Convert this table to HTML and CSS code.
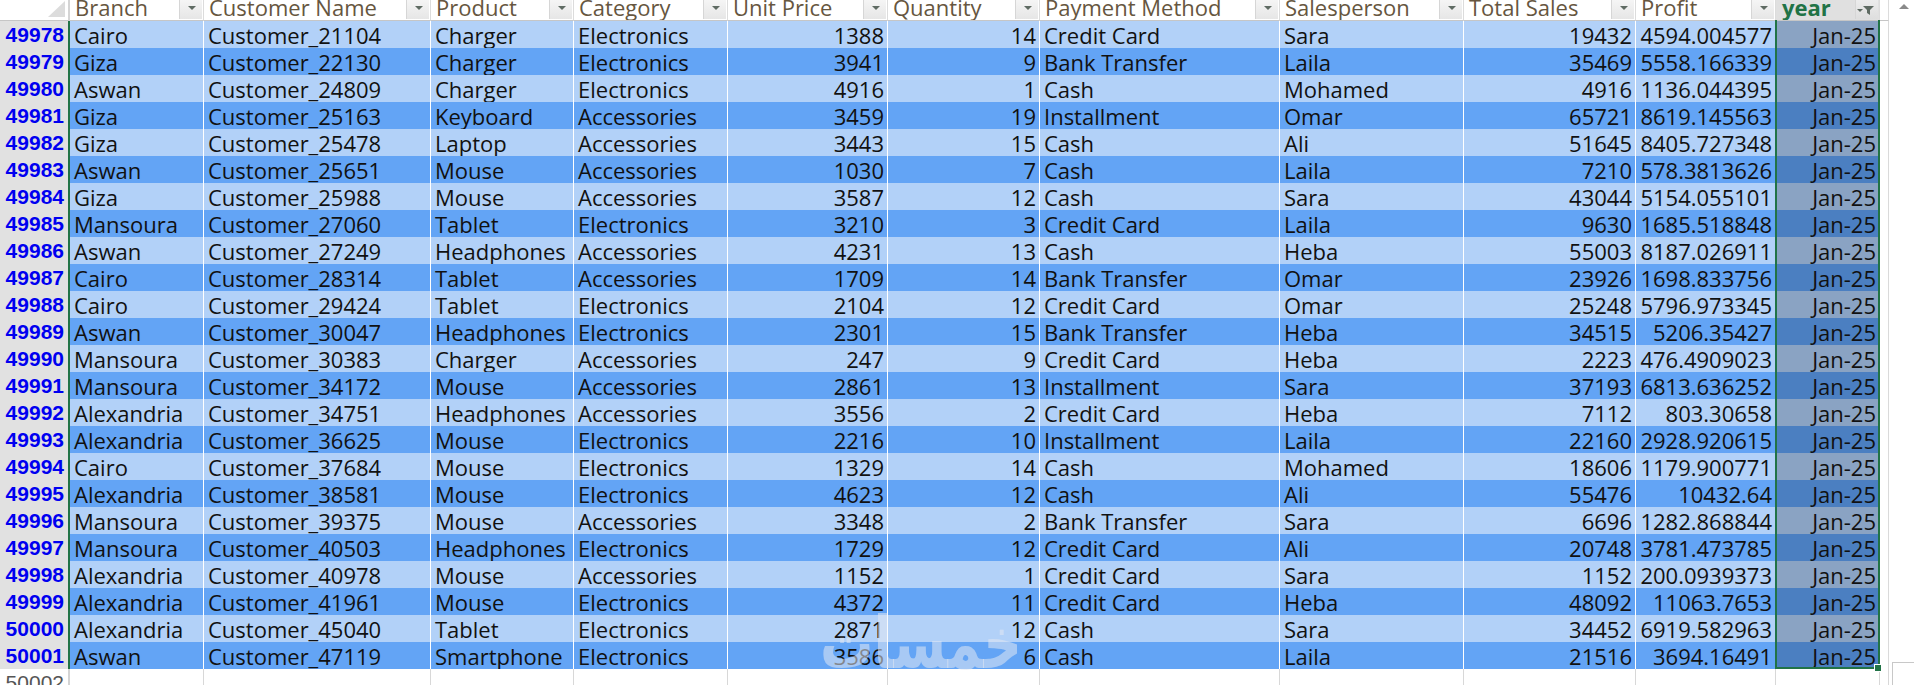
FILE: index.html
```html
<!DOCTYPE html>
<html>
<head>
<meta charset="utf-8">
<link rel="stylesheet" href="styles.css">
</head>
<body>
<div class="screen">
  <div class="sheet">
    <div class="row hdr">
      <div class="cell corner"><span class="tri"></span></div>
      <div class="cell"><span class="ht">Branch</span><span class="fb"></span></div>
      <div class="cell"><span class="ht">Customer Name</span><span class="fb"></span></div>
      <div class="cell"><span class="ht">Product</span><span class="fb"></span></div>
      <div class="cell"><span class="ht">Category</span><span class="fb"></span></div>
      <div class="cell"><span class="ht">Unit Price</span><span class="fb"></span></div>
      <div class="cell"><span class="ht">Quantity</span><span class="fb"></span></div>
      <div class="cell"><span class="ht">Payment Method</span><span class="fb"></span></div>
      <div class="cell"><span class="ht">Salesperson</span><span class="fb"></span></div>
      <div class="cell"><span class="ht">Total Sales</span><span class="fb"></span></div>
      <div class="cell"><span class="ht">Profit</span><span class="fb"></span></div>
      <div class="cell yh"><span class="ht">year</span><span class="fb ff"><svg width="18" height="10" viewBox="0 0 18 10"><path d="M0 4h6l-3 3z" fill="#5f6b63"/><path d="M6 1h11l-4 4v5l-3-2v-3z" fill="#5f6b63"/></svg></span></div>
      <div class="cell ex"></div>
    </div>

    <div class="row l"><div class="cell rh">49978</div><div class="cell">Cairo</div><div class="cell">Customer_21104</div><div class="cell">Charger</div><div class="cell">Electronics</div><div class="cell num">1388</div><div class="cell num">14</div><div class="cell">Credit Card</div><div class="cell">Sara</div><div class="cell num">19432</div><div class="cell num">4594.004577</div><div class="cell num yr">Jan-25</div><div class="cell ex"></div></div>
    <div class="row d"><div class="cell rh">49979</div><div class="cell">Giza</div><div class="cell">Customer_22130</div><div class="cell">Charger</div><div class="cell">Electronics</div><div class="cell num">3941</div><div class="cell num">9</div><div class="cell">Bank Transfer</div><div class="cell">Laila</div><div class="cell num">35469</div><div class="cell num">5558.166339</div><div class="cell num yr">Jan-25</div><div class="cell ex"></div></div>
    <div class="row l"><div class="cell rh">49980</div><div class="cell">Aswan</div><div class="cell">Customer_24809</div><div class="cell">Charger</div><div class="cell">Electronics</div><div class="cell num">4916</div><div class="cell num">1</div><div class="cell">Cash</div><div class="cell">Mohamed</div><div class="cell num">4916</div><div class="cell num">1136.044395</div><div class="cell num yr">Jan-25</div><div class="cell ex"></div></div>
    <div class="row d"><div class="cell rh">49981</div><div class="cell">Giza</div><div class="cell">Customer_25163</div><div class="cell">Keyboard</div><div class="cell">Accessories</div><div class="cell num">3459</div><div class="cell num">19</div><div class="cell">Installment</div><div class="cell">Omar</div><div class="cell num">65721</div><div class="cell num">8619.145563</div><div class="cell num yr">Jan-25</div><div class="cell ex"></div></div>
    <div class="row l"><div class="cell rh">49982</div><div class="cell">Giza</div><div class="cell">Customer_25478</div><div class="cell">Laptop</div><div class="cell">Accessories</div><div class="cell num">3443</div><div class="cell num">15</div><div class="cell">Cash</div><div class="cell">Ali</div><div class="cell num">51645</div><div class="cell num">8405.727348</div><div class="cell num yr">Jan-25</div><div class="cell ex"></div></div>
    <div class="row d"><div class="cell rh">49983</div><div class="cell">Aswan</div><div class="cell">Customer_25651</div><div class="cell">Mouse</div><div class="cell">Accessories</div><div class="cell num">1030</div><div class="cell num">7</div><div class="cell">Cash</div><div class="cell">Laila</div><div class="cell num">7210</div><div class="cell num">578.3813626</div><div class="cell num yr">Jan-25</div><div class="cell ex"></div></div>
    <div class="row l"><div class="cell rh">49984</div><div class="cell">Giza</div><div class="cell">Customer_25988</div><div class="cell">Mouse</div><div class="cell">Accessories</div><div class="cell num">3587</div><div class="cell num">12</div><div class="cell">Cash</div><div class="cell">Sara</div><div class="cell num">43044</div><div class="cell num">5154.055101</div><div class="cell num yr">Jan-25</div><div class="cell ex"></div></div>
    <div class="row d"><div class="cell rh">49985</div><div class="cell">Mansoura</div><div class="cell">Customer_27060</div><div class="cell">Tablet</div><div class="cell">Electronics</div><div class="cell num">3210</div><div class="cell num">3</div><div class="cell">Credit Card</div><div class="cell">Laila</div><div class="cell num">9630</div><div class="cell num">1685.518848</div><div class="cell num yr">Jan-25</div><div class="cell ex"></div></div>
    <div class="row l"><div class="cell rh">49986</div><div class="cell">Aswan</div><div class="cell">Customer_27249</div><div class="cell">Headphones</div><div class="cell">Accessories</div><div class="cell num">4231</div><div class="cell num">13</div><div class="cell">Cash</div><div class="cell">Heba</div><div class="cell num">55003</div><div class="cell num">8187.026911</div><div class="cell num yr">Jan-25</div><div class="cell ex"></div></div>
    <div class="row d"><div class="cell rh">49987</div><div class="cell">Cairo</div><div class="cell">Customer_28314</div><div class="cell">Tablet</div><div class="cell">Accessories</div><div class="cell num">1709</div><div class="cell num">14</div><div class="cell">Bank Transfer</div><div class="cell">Omar</div><div class="cell num">23926</div><div class="cell num">1698.833756</div><div class="cell num yr">Jan-25</div><div class="cell ex"></div></div>
    <div class="row l"><div class="cell rh">49988</div><div class="cell">Cairo</div><div class="cell">Customer_29424</div><div class="cell">Tablet</div><div class="cell">Electronics</div><div class="cell num">2104</div><div class="cell num">12</div><div class="cell">Credit Card</div><div class="cell">Omar</div><div class="cell num">25248</div><div class="cell num">5796.973345</div><div class="cell num yr">Jan-25</div><div class="cell ex"></div></div>
    <div class="row d"><div class="cell rh">49989</div><div class="cell">Aswan</div><div class="cell">Customer_30047</div><div class="cell">Headphones</div><div class="cell">Electronics</div><div class="cell num">2301</div><div class="cell num">15</div><div class="cell">Bank Transfer</div><div class="cell">Heba</div><div class="cell num">34515</div><div class="cell num">5206.35427</div><div class="cell num yr">Jan-25</div><div class="cell ex"></div></div>
    <div class="row l"><div class="cell rh">49990</div><div class="cell">Mansoura</div><div class="cell">Customer_30383</div><div class="cell">Charger</div><div class="cell">Accessories</div><div class="cell num">247</div><div class="cell num">9</div><div class="cell">Credit Card</div><div class="cell">Heba</div><div class="cell num">2223</div><div class="cell num">476.4909023</div><div class="cell num yr">Jan-25</div><div class="cell ex"></div></div>
    <div class="row d"><div class="cell rh">49991</div><div class="cell">Mansoura</div><div class="cell">Customer_34172</div><div class="cell">Mouse</div><div class="cell">Accessories</div><div class="cell num">2861</div><div class="cell num">13</div><div class="cell">Installment</div><div class="cell">Sara</div><div class="cell num">37193</div><div class="cell num">6813.636252</div><div class="cell num yr">Jan-25</div><div class="cell ex"></div></div>
    <div class="row l"><div class="cell rh">49992</div><div class="cell">Alexandria</div><div class="cell">Customer_34751</div><div class="cell">Headphones</div><div class="cell">Accessories</div><div class="cell num">3556</div><div class="cell num">2</div><div class="cell">Credit Card</div><div class="cell">Heba</div><div class="cell num">7112</div><div class="cell num">803.30658</div><div class="cell num yr">Jan-25</div><div class="cell ex"></div></div>
    <div class="row d"><div class="cell rh">49993</div><div class="cell">Alexandria</div><div class="cell">Customer_36625</div><div class="cell">Mouse</div><div class="cell">Electronics</div><div class="cell num">2216</div><div class="cell num">10</div><div class="cell">Installment</div><div class="cell">Laila</div><div class="cell num">22160</div><div class="cell num">2928.920615</div><div class="cell num yr">Jan-25</div><div class="cell ex"></div></div>
    <div class="row l"><div class="cell rh">49994</div><div class="cell">Cairo</div><div class="cell">Customer_37684</div><div class="cell">Mouse</div><div class="cell">Electronics</div><div class="cell num">1329</div><div class="cell num">14</div><div class="cell">Cash</div><div class="cell">Mohamed</div><div class="cell num">18606</div><div class="cell num">1179.900771</div><div class="cell num yr">Jan-25</div><div class="cell ex"></div></div>
    <div class="row d"><div class="cell rh">49995</div><div class="cell">Alexandria</div><div class="cell">Customer_38581</div><div class="cell">Mouse</div><div class="cell">Electronics</div><div class="cell num">4623</div><div class="cell num">12</div><div class="cell">Cash</div><div class="cell">Ali</div><div class="cell num">55476</div><div class="cell num">10432.64</div><div class="cell num yr">Jan-25</div><div class="cell ex"></div></div>
    <div class="row l"><div class="cell rh">49996</div><div class="cell">Mansoura</div><div class="cell">Customer_39375</div><div class="cell">Mouse</div><div class="cell">Accessories</div><div class="cell num">3348</div><div class="cell num">2</div><div class="cell">Bank Transfer</div><div class="cell">Sara</div><div class="cell num">6696</div><div class="cell num">1282.868844</div><div class="cell num yr">Jan-25</div><div class="cell ex"></div></div>
    <div class="row d"><div class="cell rh">49997</div><div class="cell">Mansoura</div><div class="cell">Customer_40503</div><div class="cell">Headphones</div><div class="cell">Electronics</div><div class="cell num">1729</div><div class="cell num">12</div><div class="cell">Credit Card</div><div class="cell">Ali</div><div class="cell num">20748</div><div class="cell num">3781.473785</div><div class="cell num yr">Jan-25</div><div class="cell ex"></div></div>
    <div class="row l"><div class="cell rh">49998</div><div class="cell">Alexandria</div><div class="cell">Customer_40978</div><div class="cell">Mouse</div><div class="cell">Accessories</div><div class="cell num">1152</div><div class="cell num">1</div><div class="cell">Credit Card</div><div class="cell">Sara</div><div class="cell num">1152</div><div class="cell num">200.0939373</div><div class="cell num yr">Jan-25</div><div class="cell ex"></div></div>
    <div class="row d"><div class="cell rh">49999</div><div class="cell">Alexandria</div><div class="cell">Customer_41961</div><div class="cell">Mouse</div><div class="cell">Electronics</div><div class="cell num">4372</div><div class="cell num">11</div><div class="cell">Credit Card</div><div class="cell">Heba</div><div class="cell num">48092</div><div class="cell num">11063.7653</div><div class="cell num yr">Jan-25</div><div class="cell ex"></div></div>
    <div class="row l"><div class="cell rh">50000</div><div class="cell">Alexandria</div><div class="cell">Customer_45040</div><div class="cell">Tablet</div><div class="cell">Electronics</div><div class="cell num">2871</div><div class="cell num">12</div><div class="cell">Cash</div><div class="cell">Sara</div><div class="cell num">34452</div><div class="cell num">6919.582963</div><div class="cell num yr">Jan-25</div><div class="cell ex"></div></div>
    <div class="row d"><div class="cell rh">50001</div><div class="cell">Aswan</div><div class="cell">Customer_47119</div><div class="cell">Smartphone</div><div class="cell">Electronics</div><div class="cell num">3586</div><div class="cell num">6</div><div class="cell">Cash</div><div class="cell">Laila</div><div class="cell num">21516</div><div class="cell num">3694.16491</div><div class="cell num yr">Jan-25</div><div class="cell ex"></div></div>

    <div class="row empty"><div class="cell rh">50002</div><div class="cell"></div><div class="cell"></div><div class="cell"></div><div class="cell"></div><div class="cell"></div><div class="cell"></div><div class="cell"></div><div class="cell"></div><div class="cell"></div><div class="cell"></div><div class="cell"></div><div class="cell ex"></div></div>

    <div class="selection"><span class="handle"></span></div>
    <div class="watermark">خمسات</div>
  </div>
  <div class="scrollbar">
    <div class="arrow"></div>
    <div class="track"></div>
    <div class="thumb"></div>
  </div>
</div>
</body>
</html>
```

FILE: styles.css
```css
html, body {
  margin: 0;
  padding: 0;
}
body {
  width: 1914px;
  height: 685px;
  overflow: hidden;
  background: #fff;
  font-family: "Open Sans", "DejaVu Sans", sans-serif;
}
.screen {
  display: flex;
  width: 1914px;
  height: 685px;
}
.sheet {
  position: relative;
  width: 1892px;
  flex: none;
}
.row {
  display: grid;
  grid-template-columns: 70px 134px 227px 143px 154px 160px 152px 240px 184px 172px 140px 104px 9px;
  height: 27px;
}
.cell {
  box-sizing: border-box;
  border-right: 1px solid #fff;
  border-bottom: 1px solid #fff;
  padding: 1px 3px 0 4px;
  font-size: 22px;
  line-height: 26px;
  white-space: nowrap;
  color: #111;
}
.num {
  text-align: right;
  padding-right: 3px;
}
.l .cell { background: #b2d1f8; }
.d .cell { background: #63a4f5; }
.l .yr { background: #8aa3c3; }
.d .yr { background: #4b7fc1; }

.row .rh {
  background: #e1e1e1;
  border-right: 2px solid #217346;
  border-bottom: 1px solid #f2f2f2;
  color: #0000f0;
  font-family: "Liberation Sans", Arial, sans-serif;
  font-weight: bold;
  font-size: 21px;
  text-align: right;
  padding: 1px 4px 0 0;
}
.row .ex {
  background: #fff;
  border-right: 1px solid #dadada;
  border-bottom: 1px solid #dadada;
  padding: 0;
}

/* header row */
.hdr {
  height: 21px;
}
.hdr .cell {
  background: #fff;
  border-right: 1px solid #dcdcdc;
  border-bottom: 1px solid #c6c6c6;
  display: flex;
  justify-content: space-between;
  align-items: flex-start;
  padding: 0 1px 0 5px;
  line-height: 15px;
  color: #665640;
  overflow: hidden;
}
.hdr .ht {
  display: block;
}
.hdr .fb {
  flex: none;
  width: 23px;
  height: 19px;
  box-sizing: border-box;
  border-left: 1px solid #d6d6d6;
  background: linear-gradient(#f5f5f5, #e6e6e6);
  position: relative;
}
.hdr .fb::after {
  content: "";
  position: absolute;
  left: 8px;
  top: 6px;
  border-left: 4px solid transparent;
  border-right: 4px solid transparent;
  border-top: 4px solid #5f6b63;
}
.hdr .ff::after {
  display: none;
}
.hdr .ff svg {
  position: absolute;
  left: 1px;
  top: 5px;
}
.hdr .corner {
  padding: 0;
  border-right: 2px solid #d4d4d4;
  position: relative;
}
.corner .tri {
  position: absolute;
  right: 3px;
  bottom: 3px;
  width: 0;
  height: 0;
  border-left: 17px solid transparent;
  border-bottom: 16px solid #dcdcdc;
}
.hdr .yh {
  background: #e0e0e0;
  color: #217346;
  font-weight: bold;
  padding-left: 6px;
}
.hdr .yh .fb {
  background: linear-gradient(#ececec, #dedede);
}

/* empty row below data */
.empty .cell {
  background: #fff;
  border-right: 1px solid #d8d8d8;
  border-bottom: 1px solid #d8d8d8;
}
.empty .rh {
  background: #fff;
  border-right: 2px solid #d4d4d4;
  color: #555;
  font-weight: normal;
}

/* selection around year column */
.selection {
  position: absolute;
  left: 1775px;
  top: 20px;
  width: 105px;
  height: 649px;
  box-sizing: border-box;
  border: 2px solid #217346;
  border-top: none;
  pointer-events: none;
}
.handle {
  position: absolute;
  right: -4px;
  bottom: -5px;
  width: 6px;
  height: 6px;
  background: #217346;
  border: 1px solid #fff;
}

.watermark {
  position: absolute;
  left: 820px;
  top: 603px;
  font-family: "DejaVu Sans", sans-serif;
  font-weight: bold;
  font-size: 72px;
  line-height: 80px;
  color: rgba(225, 232, 242, 0.55);
  direction: rtl;
  transform: scaleX(0.74);
  transform-origin: left top;
  pointer-events: none;
}

/* scrollbar */
.scrollbar {
  flex: none;
  width: 22px;
  display: flex;
  flex-direction: column;
  background: #fff;
}
.arrow {
  height: 18px;
  position: relative;
}
.arrow::after {
  content: "";
  position: absolute;
  left: 7px;
  top: 4px;
  border-left: 5px solid transparent;
  border-right: 5px solid transparent;
  border-bottom: 5px solid #8a8a8a;
}
.track {
  flex: 1;
}
.thumb {
  height: 22px;
  border-top: 1px solid #c8c8c8;
  border-left: 1px solid #c8c8c8;
  background: #fff;
}
```
